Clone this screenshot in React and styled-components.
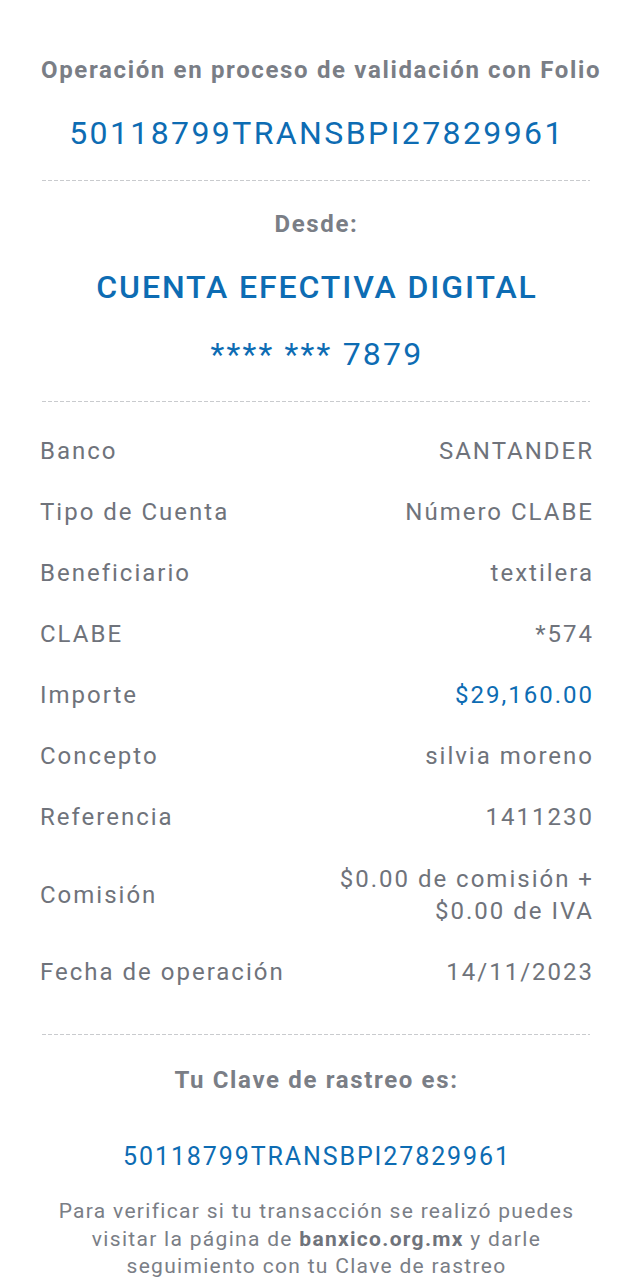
import React from "react";
import styled, { createGlobalStyle } from "styled-components";

const GlobalStyle = createGlobalStyle`
  body {
    margin: 0;
    background: #ffffff;
    font-family: Roboto, "Liberation Sans", sans-serif;
  }
`;

const rows = [
  { label: "Banco", value: "SANTANDER" },
  { label: "Tipo de Cuenta", value: "Número CLABE" },
  { label: "Beneficiario", value: "textilera" },
  { label: "CLABE", value: "*574" },
  { label: "Importe", value: "$29,160.00", accent: true },
  { label: "Concepto", value: "silvia moreno" },
  { label: "Referencia", value: "1411230" },
  { label: "Comisión", value: ["$0.00 de comisión +", "$0.00 de IVA"] },
  { label: "Fecha de operación", value: "14/11/2023" },
];

const App = () => {
  return (
    <>
      <GlobalStyle />
      <Page>
        <Heading>Operación en proceso de validación con Folio</Heading>
        <Folio>50118799TRANSBPI27829961</Folio>
        <Divider />
        <Heading $top={27}>Desde:</Heading>
        <Account>CUENTA EFECTIVA DIGITAL</Account>
        <Account $regular>**** *** 7879</Account>
        <Divider />
        <Details>
          {rows.map((row) => (
            <Row key={row.label}>
              <Label>{row.label}</Label>
              <Value $accent={row.accent} $multi={Array.isArray(row.value)}>
                {Array.isArray(row.value)
                  ? row.value.map((line) => <div key={line}>{line}</div>)
                  : row.value}
              </Value>
            </Row>
          ))}
        </Details>
        <Divider $top={31} />
        <Heading $top={29}>Tu Clave de rastreo es:</Heading>
        <Tracking>50118799TRANSBPI27829961</Tracking>
        <Note>
          Para verificar si tu transacción se realizó puedes
          <br />
          visitar la página de <b>banxico.org.mx</b> y darle
          <br />
          seguimiento con tu Clave de rastreo
        </Note>
      </Page>
    </>
  );
};

export default App;

const Page = styled.div`
  width: 632px;
  min-height: 1280px;
  box-sizing: border-box;
  padding: 54px 40px 0;
  display: flex;
  flex-direction: column;
  align-items: stretch;
  overflow: hidden;
`;

const Heading = styled.div`
  margin-top: ${(p) => (p.$top ? `${p.$top}px` : "0")};
  padding-left: 1px;
  font-size: 24px;
  line-height: 32px;
  font-weight: 700;
  color: #7a7e86;
  text-align: center;
  white-space: nowrap;
  letter-spacing: 1.65px;
`;

const Folio = styled.div`
  margin-top: 27px;
  padding-left: 2px;
  font-size: 32px;
  line-height: 40px;
  color: #0d6cb3;
  text-align: center;
  letter-spacing: 2.4px;
`;

const Divider = styled.div`
  margin: ${(p) => (p.$top ? `${p.$top}px` : "27px")} 2px 0;
  height: 1px;
  background: repeating-linear-gradient(
    to right,
    #c9cbce 0,
    #c9cbce 4px,
    transparent 4px,
    transparent 6px
  );
`;

const Account = styled.div`
  margin-top: 27px;
  padding-left: 2px;
  font-size: 32px;
  line-height: 40px;
  font-weight: ${(p) => (p.$regular ? 400 : 500)};
  color: #0d6cb3;
  text-align: center;
  letter-spacing: ${(p) => (p.$regular ? "2.2px" : "1.9px")};
`;

const Details = styled.div`
  margin-top: 19px;
  display: flex;
  flex-direction: column;
`;

const Row = styled.div`
  display: flex;
  justify-content: space-between;
  align-items: center;
  padding: 15px 0;
`;

const Label = styled.div`
  font-size: 24px;
  line-height: 31px;
  color: #6f737b;
  letter-spacing: 2px;
  white-space: nowrap;
`;

const Value = styled.div`
  margin-right: -2px;
  font-size: 24px;
  line-height: ${(p) => (p.$multi ? "32px" : "31px")};
  color: ${(p) => (p.$accent ? "#0d6cb3" : "#6f737b")};
  text-align: right;
  letter-spacing: 2px;
  white-space: nowrap;
`;

const Tracking = styled.div`
  margin-top: 44px;
  padding-left: 2px;
  font-size: 25px;
  line-height: 34px;
  color: #0d6cb3;
  text-align: center;
  letter-spacing: 1.9px;
`;

const Note = styled.div`
  margin-top: 24px;
  padding-left: 1px;
  font-size: 21px;
  line-height: 27.5px;
  color: #7a7e86;
  text-align: center;
  letter-spacing: 1.3px;
  white-space: nowrap;

  b {
    font-weight: 700;
    color: #6f737b;
  }
`;
